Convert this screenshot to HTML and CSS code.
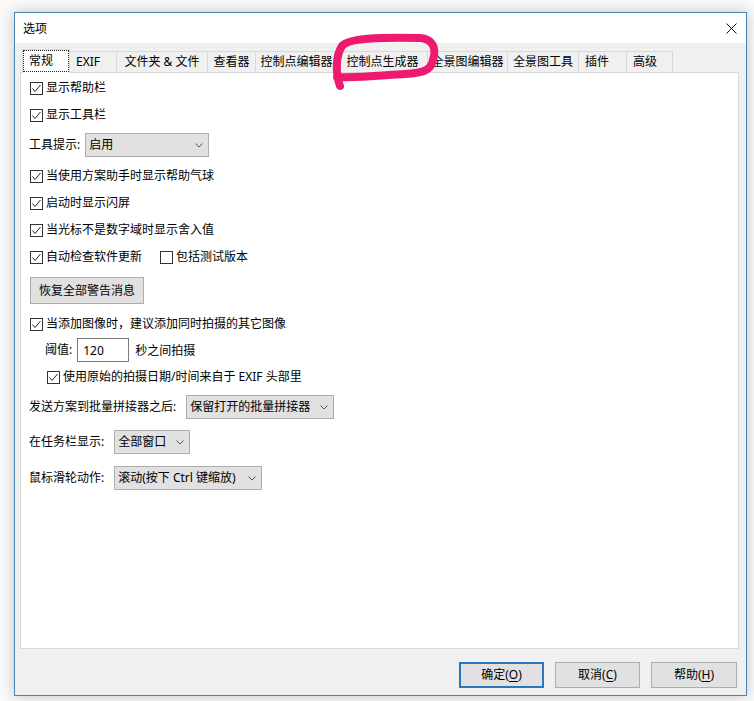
FILE: index.html
```html
<!DOCTYPE html>
<html lang="zh-CN">
<head>
<meta charset="utf-8">
<title>选项</title>
<link rel="stylesheet" href="styles.css">
</head>
<body>
<div class="window">
  <div class="titlebar">
    <span class="title">选项</span>
    <svg class="close" width="11" height="11" viewBox="0 0 11 11"><path d="M0.5 0.5L10.5 10.5M10.5 0.5L0.5 10.5" stroke="#111" stroke-width="1"/></svg>
  </div>
  <div class="content">
    <div class="tabs">
      <div class="tab active"><span class="focus">常规</span></div>
      <div class="tab short w47">EXIF</div>
      <div class="tab w91">文件夹 &amp; 文件</div>
      <div class="tab w48">查看器</div>
      <div class="tab w82">控制点编辑器</div>
      <div class="tab w90">控制点生成器</div>
      <div class="tab w80">全景图编辑器</div>
      <div class="tab w71">全景图工具</div>
      <div class="tab short w48">插件</div>
      <div class="tab short w46">高级</div>
    </div>
    <div class="panel">
      <label class="cb"><span class="box"><svg width="11" height="11" viewBox="0 0 11 11"><path d="M1.5 5.5L4 8.5L9.5 2" fill="none" stroke="#222" stroke-width="1"/></svg></span>显示帮助栏</label>
      <label class="cb mt11"><span class="box"><svg width="11" height="11" viewBox="0 0 11 11"><path d="M1.5 5.5L4 8.5L9.5 2" fill="none" stroke="#222" stroke-width="1"/></svg></span>显示工具栏</label>
      <div class="field mt10">
        <span class="label">工具提示:</span>
        <div class="select sel-tip"><span>启用</span><svg class="chev" width="8" height="5" viewBox="0 0 8 5"><path d="M0.5 0.5L4 4L7.5 0.5" fill="none" stroke="#555" stroke-width="1"/></svg></div>
      </div>
      <label class="cb mt11"><span class="box"><svg width="11" height="11" viewBox="0 0 11 11"><path d="M1.5 5.5L4 8.5L9.5 2" fill="none" stroke="#222" stroke-width="1"/></svg></span>当使用方案助手时显示帮助气球</label>
      <label class="cb mt11"><span class="box"><svg width="11" height="11" viewBox="0 0 11 11"><path d="M1.5 5.5L4 8.5L9.5 2" fill="none" stroke="#222" stroke-width="1"/></svg></span>启动时显示闪屏</label>
      <label class="cb mt11"><span class="box"><svg width="11" height="11" viewBox="0 0 11 11"><path d="M1.5 5.5L4 8.5L9.5 2" fill="none" stroke="#222" stroke-width="1"/></svg></span>当光标不是数字域时显示舍入值</label>
      <div class="pair mt11">
        <label class="cb"><span class="box"><svg width="11" height="11" viewBox="0 0 11 11"><path d="M1.5 5.5L4 8.5L9.5 2" fill="none" stroke="#222" stroke-width="1"/></svg></span>自动检查软件更新</label>
        <label class="cb second"><span class="box"></span>包括测试版本</label>
      </div>
      <button class="btn restore mt12">恢复全部警告消息</button>
      <label class="cb mt12"><span class="box"><svg width="11" height="11" viewBox="0 0 11 11"><path d="M1.5 5.5L4 8.5L9.5 2" fill="none" stroke="#222" stroke-width="1"/></svg></span>当添加图像时，建议添加同时拍摄的其它图像</label>
      <div class="field indent mt6">
        <span class="label">阈值:</span>
        <div class="input">120</div>
        <span class="after">秒之间拍摄</span>
      </div>
      <label class="cb sub mt7"><span class="box"><svg width="11" height="11" viewBox="0 0 11 11"><path d="M1.5 5.5L4 8.5L9.5 2" fill="none" stroke="#222" stroke-width="1"/></svg></span>使用原始的拍摄日期/时间来自于 EXIF 头部里</label>
      <div class="field mt10">
        <span class="label">发送方案到批量拼接器之后:</span>
        <div class="select sel-batch"><span>保留打开的批量拼接器</span><svg class="chev" width="8" height="5" viewBox="0 0 8 5"><path d="M0.5 0.5L4 4L7.5 0.5" fill="none" stroke="#555" stroke-width="1"/></svg></div>
      </div>
      <div class="field mt11">
        <span class="label">在任务栏显示:</span>
        <div class="select sel-task"><span>全部窗口</span><svg class="chev" width="8" height="5" viewBox="0 0 8 5"><path d="M0.5 0.5L4 4L7.5 0.5" fill="none" stroke="#555" stroke-width="1"/></svg></div>
      </div>
      <div class="field mt12">
        <span class="label">鼠标滑轮动作:</span>
        <div class="select sel-wheel"><span>滚动(按下 Ctrl 键缩放)</span><svg class="chev" width="8" height="5" viewBox="0 0 8 5"><path d="M0.5 0.5L4 4L7.5 0.5" fill="none" stroke="#555" stroke-width="1"/></svg></div>
      </div>
    </div>
    <div class="footer">
      <button class="btn action default">确定(<u>O</u>)</button>
      <button class="btn action">取消(<u>C</u>)</button>
      <button class="btn action wide">帮助(<u>H</u>)</button>
    </div>
  </div>
</div>
<svg class="annotation" width="754" height="701" viewBox="0 0 754 701">
  <path d="M340 86 C335 72 336 55 342 46 C348 38 380 37 420 38 C432 39 437 47 433 60 C431 70 424 73 405 74 C385 75 360 78 337 77" fill="none" stroke="#ee1a70" stroke-width="8" stroke-linecap="round" stroke-linejoin="round"/>
</svg>
</body>
</html>
```

FILE: styles.css
```css
* { box-sizing: border-box; }

html, body { margin: 0; }

body {
  width: 754px;
  height: 701px;
  overflow: hidden;
  background: #fafafa;
  padding: 12px 0 0 14px;
  font-family: "Noto Sans", "Noto Sans CJK SC", sans-serif;
  font-size: 12px;
  color: #000;
}

.window {
  width: 733px;
  height: 684px;
  border: 1px solid #4a84b4;
  background: #f0f0f0;
  box-shadow: 0 0 14px rgba(0, 0, 0, 0.22);
  display: flex;
  flex-direction: column;
}

.titlebar {
  height: 30px;
  flex: none;
  background: #fff;
  display: flex;
  align-items: center;
  justify-content: space-between;
  padding: 0 9px 0 8px;
}

.title { line-height: 16px; margin-top: 1px; }

.close { display: block; margin-top: 1px; }

.content {
  flex: 1;
  display: flex;
  flex-direction: column;
  padding: 6px 7px 0 5px;
}

.tabs {
  height: 23px;
  flex: none;
  display: flex;
  align-items: flex-end;
  padding-left: 2px;
}

.tab {
  height: 21px;
  border-top: 1px solid #d9d9d9;
  border-right: 1px solid #d9d9d9;
  background: #f0f0f0;
  display: flex;
  align-items: center;
  justify-content: center;
  line-height: 16px;
  white-space: nowrap;
  padding-bottom: 1px;
}

.tab.short { justify-content: flex-start; padding-left: 6px; }

.w46 { width: 46px; }
.w47 { width: 47px; }
.w48 { width: 48px; }
.w71 { width: 71px; }
.w80 { width: 80px; }
.w82 { width: 82px; }
.w90 { width: 90px; }
.w91 { width: 91px; }

.tab.active {
  width: 48px;
  height: 24px;
  margin-bottom: -1px;
  border: 1px solid #d9d9d9;
  border-bottom: none;
  background: #fff;
  position: relative;
  z-index: 1;
  padding: 0 0 1px 0;
  justify-content: flex-start;
  align-items: stretch;
}

.focus {
  flex: 1;
  border: 1px dotted #222;
  padding-left: 5px;
  display: flex;
  align-items: center;
}

.panel {
  height: 577px;
  flex: none;
  background: #fff;
  border: 1px solid #d9d9d9;
  padding: 7px 0 0 9px;
  display: flex;
  flex-direction: column;
  align-items: flex-start;
}

.mt6 { margin-top: 6px; }
.mt7 { margin-top: 7px; }
.mt10 { margin-top: 10px; }
.mt11 { margin-top: 11px; }
.mt12 { margin-top: 12px; }

.cb {
  display: flex;
  align-items: center;
  height: 16px;
  line-height: 16px;
  white-space: nowrap;
}

.box {
  width: 13px;
  height: 13px;
  flex: none;
  border: 1px solid #333;
  background: #fff;
  margin-right: 3px;
  display: flex;
}

.box svg { display: block; }

.pair { display: flex; align-items: center; }

.cb.second { margin-left: 18px; }

.cb.sub { margin-left: 17px; }

.field {
  display: flex;
  align-items: center;
  height: 24px;
  white-space: nowrap;
}

.field .label { margin-left: -1px; line-height: 16px; }

.field.indent { margin-left: 16px; }

.select {
  height: 24px;
  border: 1px solid #adadad;
  background: #e1e1e1;
  display: flex;
  align-items: center;
  justify-content: space-between;
  padding: 0 5px 0 3px;
  margin-left: 10px;
  line-height: 16px;
}

.chev { display: block; flex: none; }

.sel-tip { width: 124px; margin-left: 5px; }
.sel-batch { width: 148px; }
.sel-task { width: 76px; }
.sel-wheel { width: 148px; }

.input {
  width: 52px;
  height: 24px;
  margin-left: 5px;
  border: 1px solid #7a7a7a;
  background: #fff;
  padding-left: 5px;
  display: flex;
  align-items: center;
}

.after { margin-left: 6px; }

.btn {
  font: inherit;
  color: #000;
  background: #e1e1e1;
  border: 1px solid #adadad;
  padding: 0;
  line-height: 16px;
}

.btn u { text-underline-offset: 2px; }

.restore { width: 114px; height: 27px; }

.footer {
  flex: 1;
  display: flex;
  justify-content: flex-end;
  align-items: flex-start;
  gap: 11px;
  padding: 13px 2px 0 0;
}

.action { width: 85px; height: 26px; }

.action.wide { width: 86px; }

.action.default { border: 2px solid #2b76bd; }

.annotation {
  position: absolute;
  left: 0;
  top: 0;
  pointer-events: none;
}
```
